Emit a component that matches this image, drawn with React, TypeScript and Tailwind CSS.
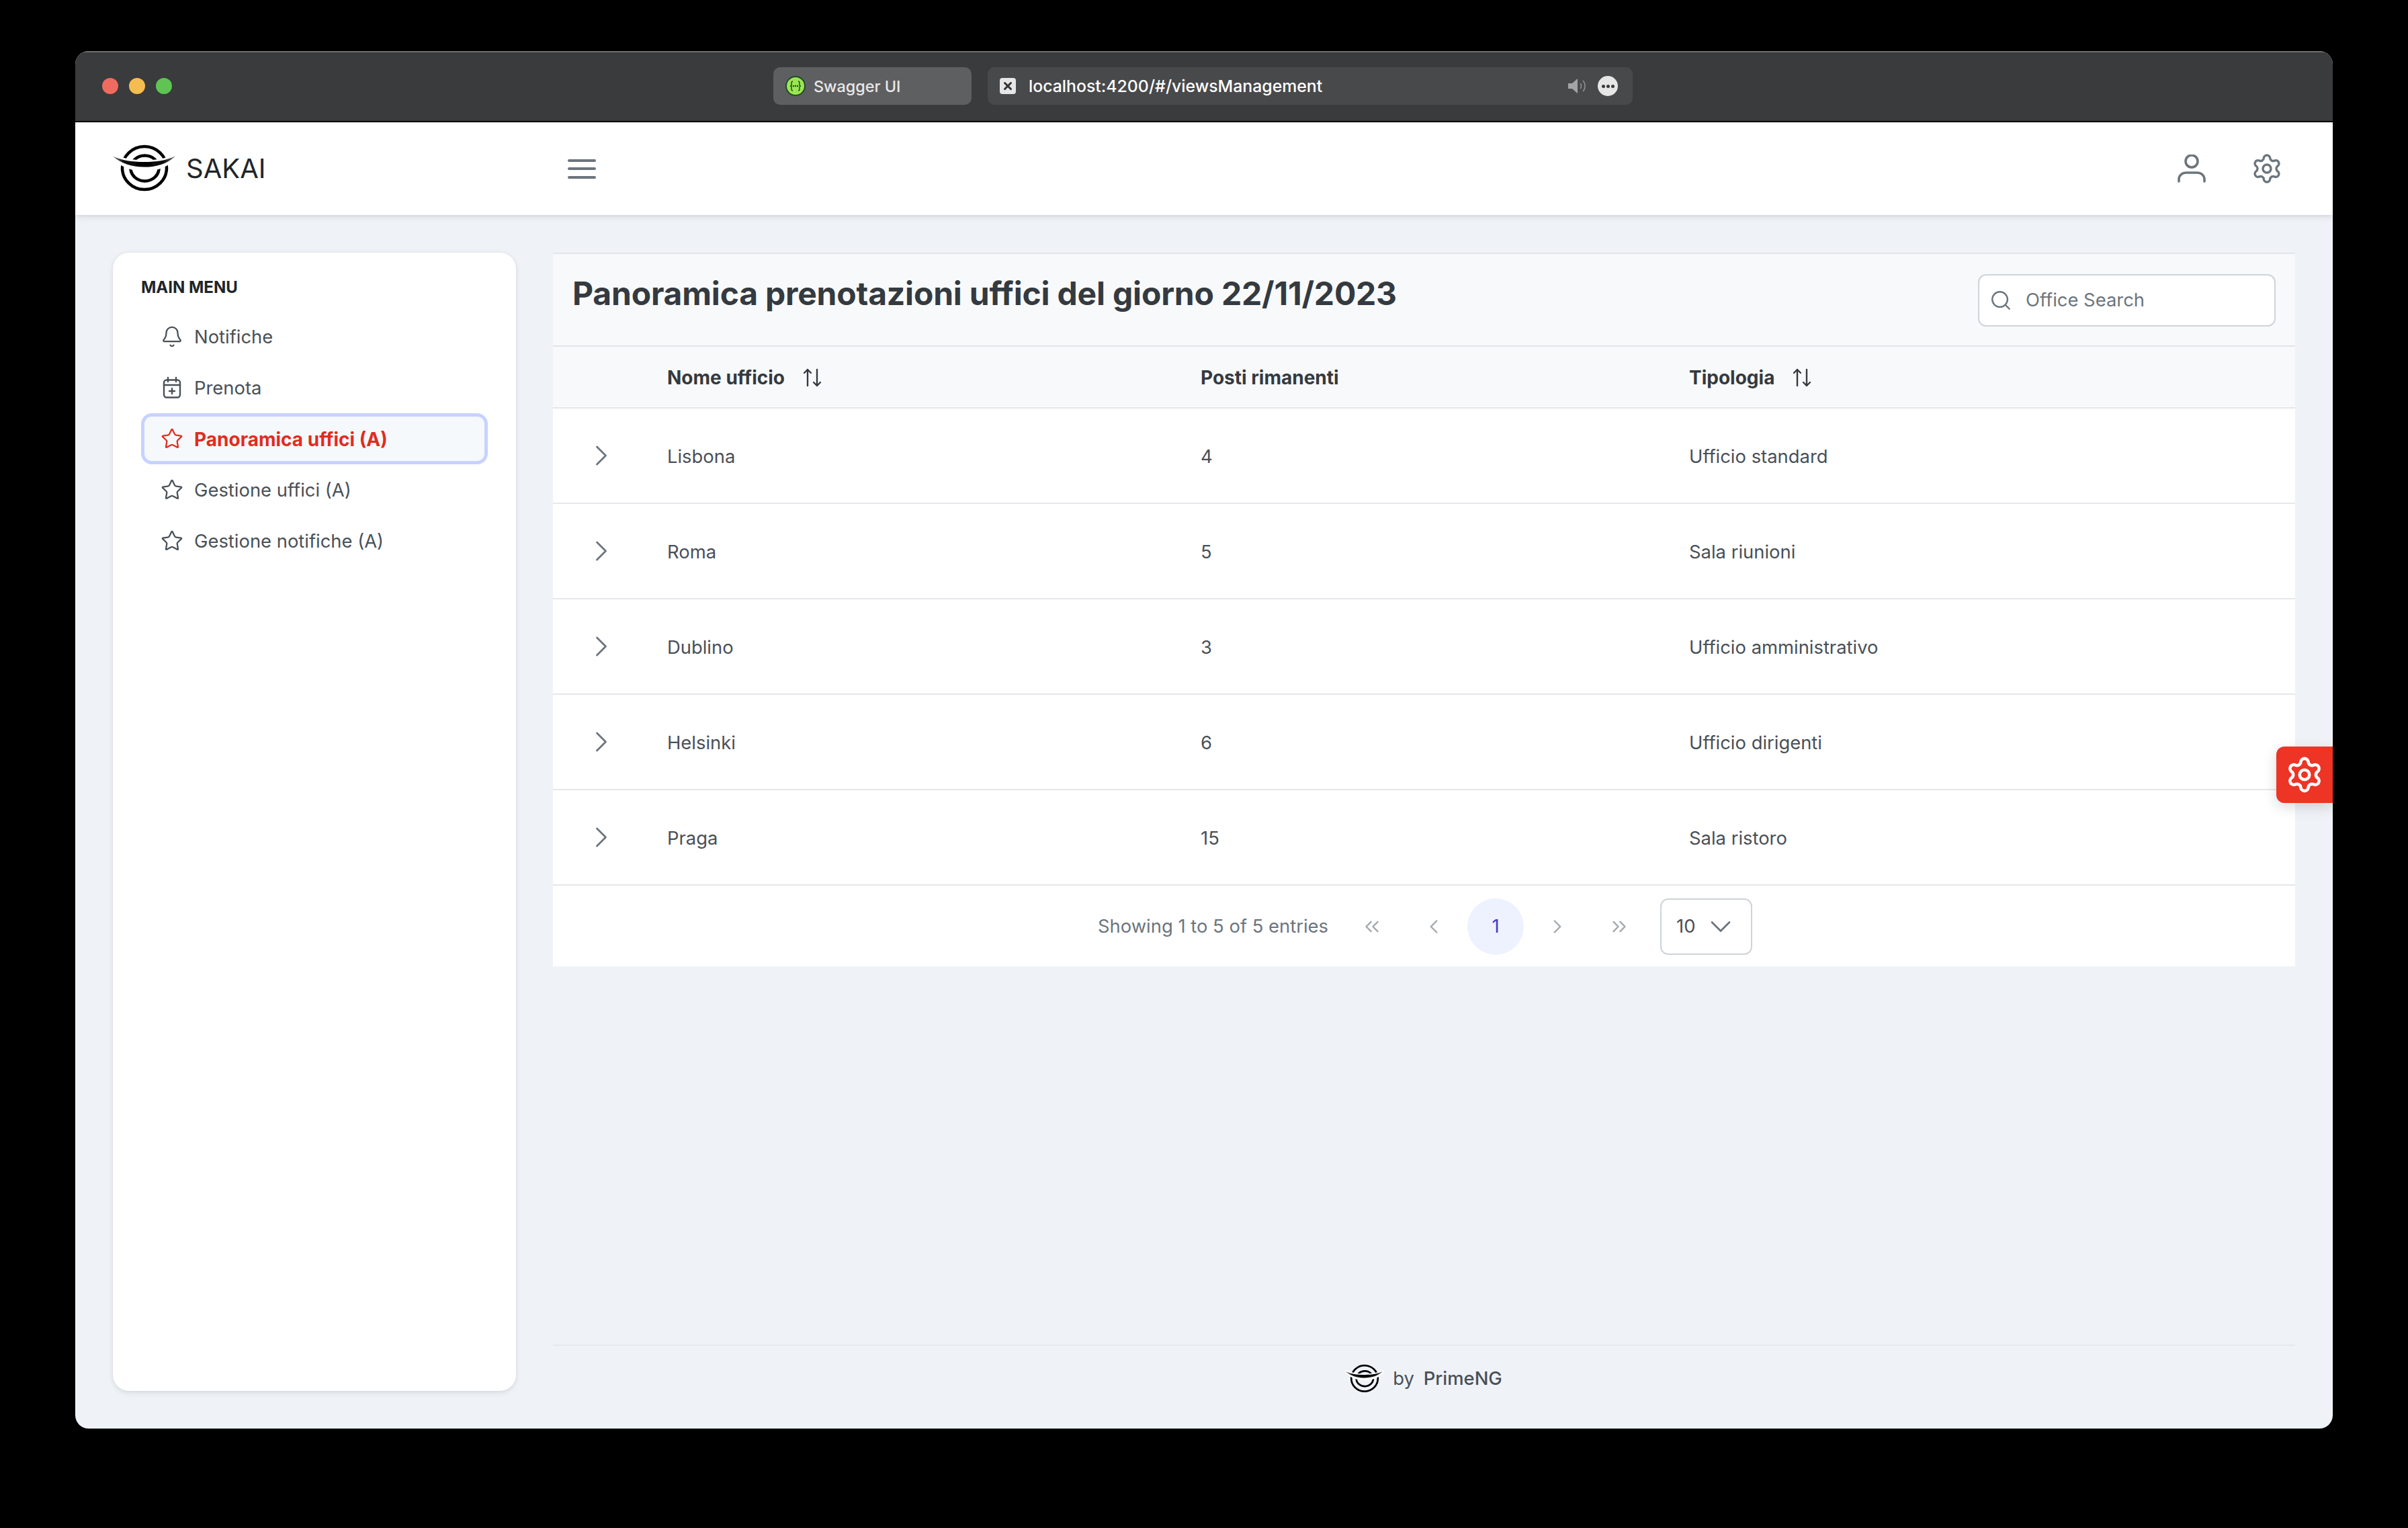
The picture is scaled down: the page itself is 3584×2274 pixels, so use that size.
import { Bell, ChevronDown, ChevronLeft, ChevronRight, ChevronsLeft, ChevronsRight, Search, Settings, Star, X } from 'lucide-react';

const menu = [
  { label: 'Notifiche', icon: 'bell' },
  { label: 'Prenota', icon: 'calendar' },
  { label: 'Panoramica uffici (A)', icon: 'star', active: true },
  { label: 'Gestione uffici (A)', icon: 'star' },
  { label: 'Gestione notifiche (A)', icon: 'star' },
];

const offices = [
  { name: 'Lisbona', seats: '4', type: 'Ufficio standard' },
  { name: 'Roma', seats: '5', type: 'Sala riunioni' },
  { name: 'Dublino', seats: '3', type: 'Ufficio amministrativo' },
  { name: 'Helsinki', seats: '6', type: 'Ufficio dirigenti' },
  { name: 'Praga', seats: '15', type: 'Sala ristoro' },
];

function Logo({ className }: { className: string }) {
  return (
    <svg viewBox="0 0 110 90" className={className} fill="none">
      <defs>
        <linearGradient id="swoosh" x1="0" x2="1" y1="0" y2="0">
          <stop offset="0" stopColor="#777" />
          <stop offset="0.18" stopColor="#111" />
          <stop offset="0.5" stopColor="#000" />
          <stop offset="0.82" stopColor="#111" />
          <stop offset="1" stopColor="#777" />
        </linearGradient>
        <filter id="soft" x="-10%" y="-30%" width="120%" height="160%">
          <feGaussianBlur stdDeviation="0.7" />
        </filter>
      </defs>
      <ellipse cx="55" cy="44" rx="33" ry="32" stroke="#000" strokeWidth="4.5" />
      <ellipse cx="55.5" cy="44.5" rx="21" ry="19" stroke="#000" strokeWidth="4.5" />
      <path d="M8 22 C30 36 80 36 102 22 L102 30 C90 44 70 49 55 49 C40 49 20 44 8 30 Z" fill="#fff" />
      <path d="M8 26.5 C22 33 36 35 55 35 C74 35 88 33 101 26 C90 37 74 42.5 55 42.5 C36 42.5 20 37 8 26.5 Z" fill="url(#swoosh)" filter="url(#soft)" />
    </svg>
  );
}

function SortIcon() {
  return (
    <svg viewBox="0 0 28 28" className="w-[28px] h-[28px] ml-[27px]" fill="none" stroke="#343a40" strokeWidth="2.4" strokeLinecap="round" strokeLinejoin="round">
      <path d="M7 26V2M2 7l5-5 5 5" />
      <path d="M21 2v24M16 21l5 5 5-5" />
    </svg>
  );
}

function MenuIcon({ name, active }: { name: string; active?: boolean }) {
  const cls = 'w-[34px] h-[34px] ' + (active ? 'text-[#e02d1f]' : 'text-[#495057]');
  if (name === 'bell') return <Bell className={cls} strokeWidth={1.6} />;
  if (name === 'calendar') {
    return (
      <svg viewBox="0 0 34 34" className={cls} fill="none" stroke="currentColor" strokeWidth="2.4" strokeLinecap="round">
        <rect x="5" y="5.500" width="24" height="26" rx="4" />
        <path d="M5 13h24M11 2v6M23 2v6M17 18v8M13 22h8" />
      </svg>
    );
  }
  return <Star className={cls} strokeWidth={1.6} />;
}

export default function App() {
  return (
    <div className="w-[3584px] h-[2274px] bg-black pt-[76px] pl-[112px] font-['Inter',sans-serif] text-[27.4px] text-[#495057]">
      <div className="relative w-[3360px] h-[2050px] rounded-[20px] overflow-hidden flex flex-col bg-[#eff3f8]">
        {/* browser chrome */}
        <div className="h-[106px] shrink-0 bg-[#3a3b3d] border-t-2 border-b-2 border-t-[#6e6e6e] border-b-black flex items-center pb-[2px]">
          <div className="flex gap-[16px] ml-[40px]">
            <span className="w-[24px] h-[24px] rounded-full bg-[#ef6b5f]" />
            <span className="w-[24px] h-[24px] rounded-full bg-[#f5bd4f]" />
            <span className="w-[24px] h-[24px] rounded-full bg-[#5fc454]" />
          </div>
          <div className="ml-[895px] w-[295px] h-[56px] rounded-[10px] bg-[#5e5f61] flex items-center pl-[18px] gap-[12px] text-[23.4px] font-medium text-[#e8e8e8]">
            <svg viewBox="0 0 30 30" className="w-[30px] h-[30px]">
              <circle cx="15" cy="15" r="14" fill="#9be650" stroke="#1f4a2a" strokeWidth="2" />
              <path d="M11 8c-2 0-2 1.500-2 3v2c0 1-1 2-2 2 1 0 2 1 2 2v2c0 1.500 0 3 2 3M19 8c2 0 2 1.500 2 3v2c0 1 1 2 2 2-1 0-2 1-2 2v2c0 1.500 0 3-2 3" fill="none" stroke="#1f4a2a" strokeWidth="1.500" />
              <circle cx="12" cy="15" r="1.200" fill="#1f4a2a" />
              <circle cx="15" cy="15" r="1.200" fill="#1f4a2a" />
              <circle cx="18" cy="15" r="1.200" fill="#1f4a2a" />
            </svg>
            <span className="pt-[2px]">Swagger UI</span>
          </div>
          <div className="ml-[24px] w-[960px] h-[56px] rounded-[10px] bg-[#48494b] flex items-center pl-[18px] pr-[22px] text-[24.8px] font-medium text-white">
            <span className="w-[24px] h-[24px] rounded-[4px] bg-[#e6e6e6] flex items-center justify-center">
              <X className="w-[18px] h-[18px] text-[#333]" strokeWidth={4} />
            </span>
            <span className="ml-[19px] pt-[2px]">localhost:4200/#/viewsManagement</span>
            <svg viewBox="0 0 28 22" className="ml-auto w-[28px] h-[22px]" fill="none">
              <path d="M0 7h6l8-7v22l-8-7H0z" fill="#a3a4a5" />
              <path d="M18 7c2 2 2 6 0 8M22 3c4 4 4 12 0 16" stroke="#8d8e90" strokeWidth="1.600" />
            </svg>
            <span className="ml-[16px] w-[30px] h-[30px] rounded-full bg-[#e6e6e6] flex items-center justify-center gap-[2px]">
              <span className="w-[5px] h-[5px] rounded-full bg-[#3a3b3d]" />
              <span className="w-[5px] h-[5px] rounded-full bg-[#3a3b3d]" />
              <span className="w-[5px] h-[5px] rounded-full bg-[#3a3b3d]" />
            </span>
          </div>
        </div>

        {/* top bar */}
        <div className="h-[138px] shrink-0 bg-white flex items-center shadow-[0_6px_10px_rgba(0,0,0,0.03),0_0_4px_rgba(0,0,0,0.05),0_2px_8px_rgba(0,0,0,0.08)] relative">
          <Logo className="w-[110px] h-[90px] ml-[48px]" />
          <span className="ml-[7px] w-[116px] text-[40px] font-normal text-[#212529] leading-none whitespace-nowrap">SAKAI</span>
          <div className="ml-[452px] flex flex-col gap-[8.500px]">
            <span className="w-[42px] h-[4px] rounded-full bg-[#6c757d]" />
            <span className="w-[42px] h-[4px] rounded-full bg-[#6c757d]" />
            <span className="w-[42px] h-[4px] rounded-full bg-[#6c757d]" />
          </div>
          <svg viewBox="0 0 42 42" className="ml-auto w-[42px] h-[42px]" fill="none" stroke="#6c757d" strokeWidth="3.600" strokeLinecap="round">
            <circle cx="21" cy="10" r="9" />
            <path d="M2 40v-3c0-6 5-10 11-10h16c6 0 11 4 11 10v3" />
          </svg>
          <Settings className="ml-[67px] mr-[74px] w-[48px] h-[48px] text-[#6c757d]" strokeWidth={1.7} />
        </div>

        {/* page */}
        <div className="flex-1 flex pl-[56px] pr-[56px] pt-[56px] pb-[56px] min-h-0">
          <aside className="w-[600px] shrink-0 bg-white rounded-[24px] shadow-[0_6px_10px_rgba(0,0,0,0.02),0_0_4px_rgba(0,0,0,0.05),0_2px_8px_rgba(0,0,0,0.08)] pl-[42px] pr-[42px] pt-[34px]">
            <div className="text-[24px] font-bold text-[#212529] h-[36px] leading-[36px]">MAIN MENU</div>
            <div className="mt-[17px] flex flex-col">
              {menu.map(item => (
                <div
                  key={item.label}
                  className={'h-[76px] flex items-center gap-[16px] rounded-[16px] ' + (item.active ? 'bg-[#f6f9fc] border-[5px] border-[#c7d2fe] pl-[24px] text-[28px] font-bold text-[#e02d1f]' : 'pl-[29px] text-[#495057]')}
                >
                  <MenuIcon name={item.icon} active={item.active} />
                  <span className="pt-[2px]">{item.label}</span>
                </div>
              ))}
            </div>
          </aside>

          <main className="flex-1 ml-[55px] flex flex-col -mb-[56px]">
            <div className="bg-white">
              <div className="h-[140px] bg-[#f8f9fa] border-t-2 border-b-2 border-[#e2e5e9] flex justify-between px-[29px] pt-[29px]">
                <h1 className="text-[48px] font-bold text-[#343a40] leading-[60px] tracking-[-0.2px]">Panoramica prenotazioni uffici del giorno 22/11/2023</h1>
                <div className="w-[443px] h-[78px] mt-[1px] rounded-[12px] border-2 border-[#ced4da] bg-white flex items-center pl-[15px]">
                  <Search className="w-[34px] h-[34px] text-[#6c757d] shrink-0" strokeWidth={1.7} />
                  <input placeholder="Office Search" className="ml-[20px] w-[340px] bg-transparent outline-none text-[27.4px] text-[#495057] placeholder:text-[#6c757d]" />
                </div>
              </div>
              <table className="w-full table-fixed border-collapse">
                <colgroup>
                  <col className="w-[142px]" />
                  <col className="w-[794px]" />
                  <col className="w-[727px]" />
                  <col />
                </colgroup>
                <thead>
                  <tr className="h-[91px] bg-[#f8f9fa] border-b-2 border-[#e5e7eb] text-[28px] text-[#343a40] font-bold text-left">
                    <th />
                    <th className="px-[28px] pt-[2px] font-bold"><span className="flex items-center">Nome ufficio<SortIcon /></span></th>
                    <th className="px-[28px] pt-[2px] font-bold">Posti rimanenti</th>
                    <th className="px-[28px] pt-[2px] font-bold"><span className="flex items-center">Tipologia<SortIcon /></span></th>
                  </tr>
                </thead>
                <tbody>
                  {offices.map(o => (
                    <tr key={o.name} className="h-[142px] border-b-2 border-[#e5e7eb]">
                      <td className="pl-[46px]"><ChevronRight className="w-[52px] h-[52px] text-[#6c757d]" strokeWidth={1.3} /></td>
                      <td className="px-[28px] pt-[3px]">{o.name}</td>
                      <td className="px-[28px] pt-[3px]">{o.seats}</td>
                      <td className="px-[28px] pt-[3px]">{o.type}</td>
                    </tr>
                  ))}
                </tbody>
              </table>
              <div className="h-[122px] flex items-center justify-center pl-[3px] pt-[2px] border-b-2 border-[#f1f3f5]">
                <span className="text-[#6c757d] mr-[23px]">Showing 1 to 5 of 5 entries</span>
                <div className="flex gap-[8px] text-[#a2a8ad]">
                  <span className="w-[84px] h-[84px] flex items-center justify-center"><ChevronsLeft className="w-[34px] h-[34px]" strokeWidth={1.7} /></span>
                  <span className="w-[84px] h-[84px] flex items-center justify-center"><ChevronLeft className="w-[34px] h-[34px]" strokeWidth={1.7} /></span>
                  <span className="w-[84px] h-[84px] rounded-full bg-[#eef2ff] text-[#4338ca] flex items-center justify-center">1</span>
                  <span className="w-[84px] h-[84px] flex items-center justify-center"><ChevronRight className="w-[34px] h-[34px]" strokeWidth={1.7} /></span>
                  <span className="w-[84px] h-[84px] flex items-center justify-center"><ChevronsRight className="w-[34px] h-[34px]" strokeWidth={1.7} /></span>
                </div>
                <div className="ml-[19px] w-[137px] h-[84px] rounded-[12px] border-2 border-[#ced4da] bg-white flex items-center pl-[22px]">
                  <span>10</span>
                  <ChevronDown className="ml-[12px] w-[52px] h-[52px] text-[#6c757d]" strokeWidth={1.3} />
                </div>
              </div>
            </div>

            <footer className="mt-auto mb-[25px] h-[100px] pr-[5px] border-t-2 border-[#e5e9ee] flex items-center justify-center">
              <Logo className="w-[66px] h-[54px] mr-[9px]" />
              <span>by</span>
              <span className="ml-[14px] font-medium">PrimeNG</span>
            </footer>
          </main>
        </div>

        {/* config button */}
        <div className="absolute right-0 top-[1035px] w-[84px] h-[84px] bg-[#ed3425] rounded-l-[12px] flex items-center justify-center shadow-[0_6px_20px_rgba(0,0,0,0.15)]">
          <Settings className="w-[58px] h-[58px] text-white" strokeWidth={1.9} />
        </div>
      </div>
    </div>
  );
}
